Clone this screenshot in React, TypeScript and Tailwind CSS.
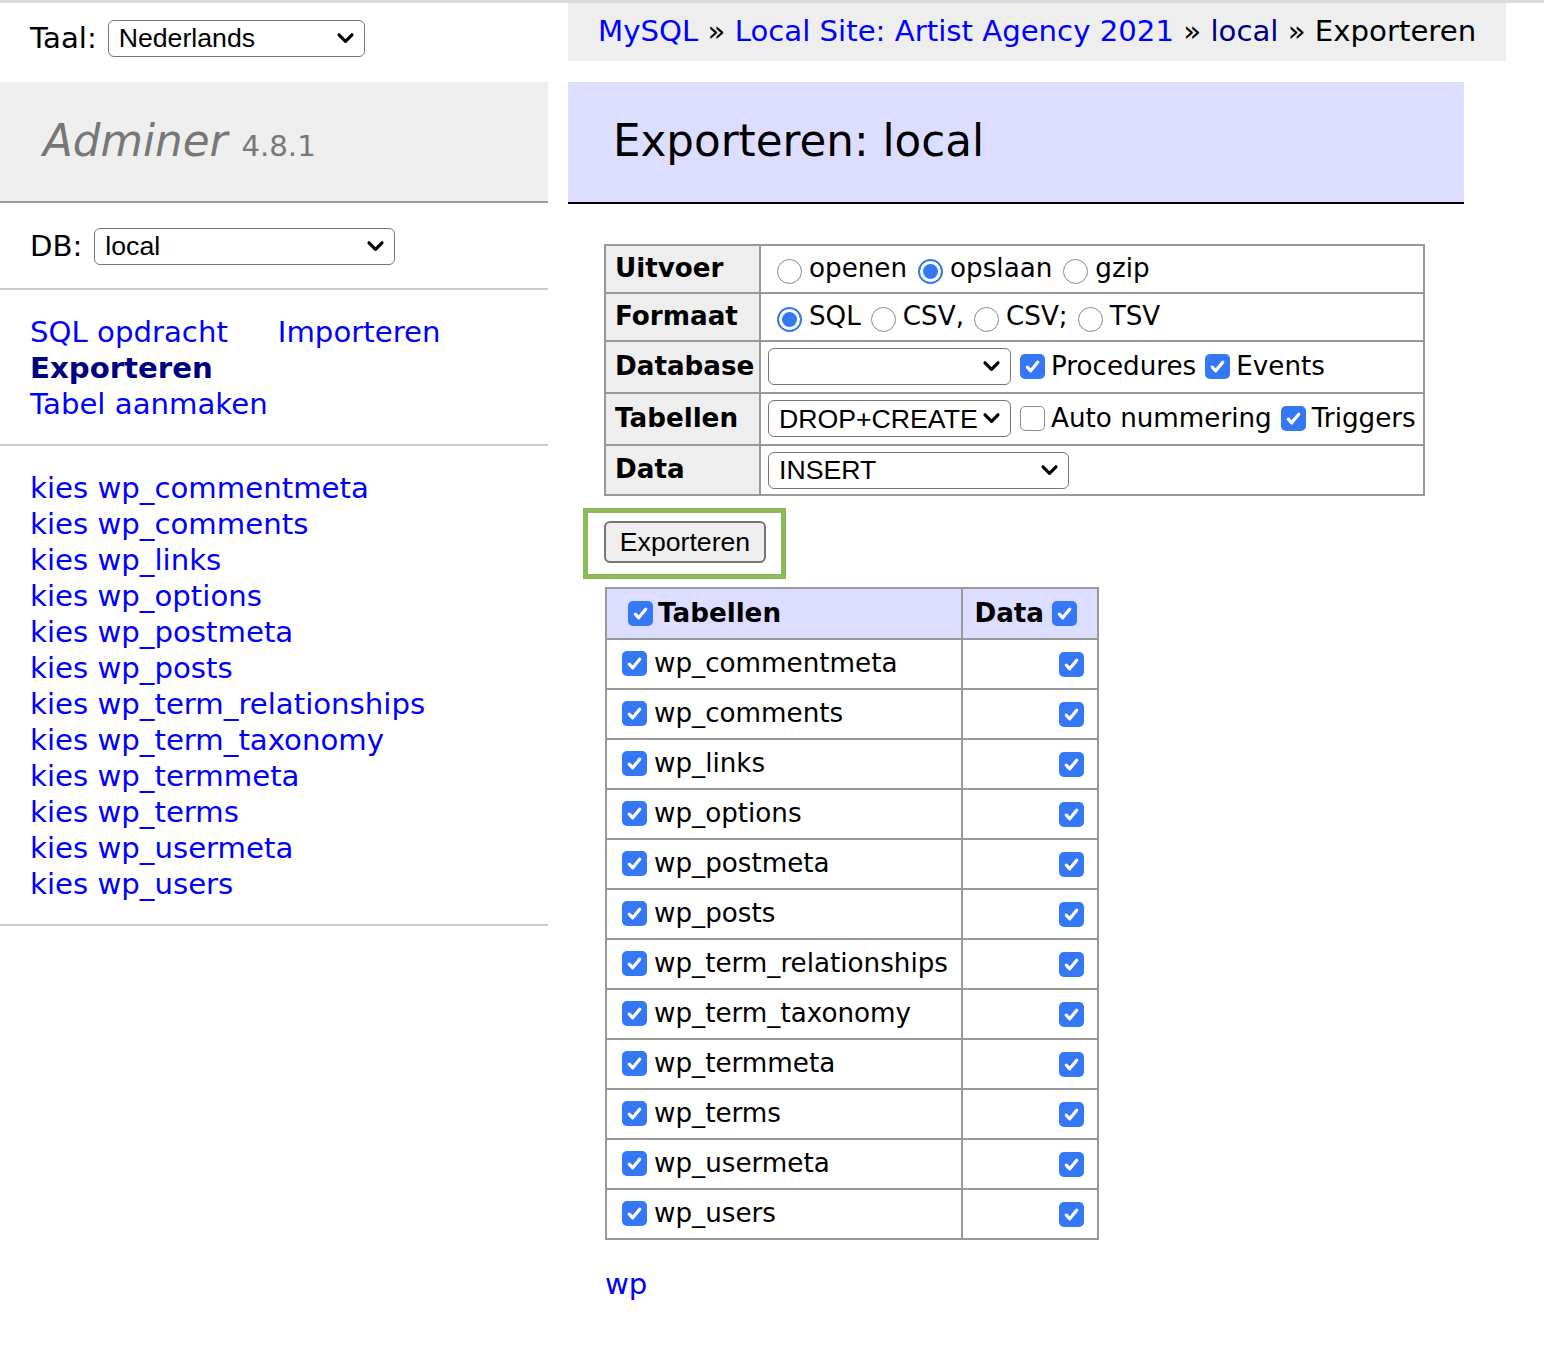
import React from 'react';

const tables = [
  'wp_commentmeta',
  'wp_comments',
  'wp_links',
  'wp_options',
  'wp_postmeta',
  'wp_posts',
  'wp_term_relationships',
  'wp_term_taxonomy',
  'wp_termmeta',
  'wp_terms',
  'wp_usermeta',
  'wp_users',
];

const Check = ({ checked = true }: { checked?: boolean }) =>
  checked ? (
    <span className="inline-flex h-[25px] w-[25px] shrink-0 items-center justify-center rounded-[5px] bg-[#3478f6]">
      <svg viewBox="0 0 16 16" className="h-[19px] w-[19px]">
        <path d="M3.6 8.6l2.9 3 5.9-7.2" fill="none" stroke="white" strokeWidth="2.7" strokeLinecap="round" strokeLinejoin="round" />
      </svg>
    </span>
  ) : (
    <span className="inline-block h-[25px] w-[25px] shrink-0 rounded-[5px] border-[1.5px] border-[#8a8a8a] bg-white" />
  );

const Radio = ({ checked = false }: { checked?: boolean }) =>
  checked ? (
    <span className="mt-[6px] inline-flex h-[25px] w-[25px] shrink-0 items-center justify-center rounded-full border-2 border-[#3478f6] bg-white">
      <span className="h-[15px] w-[15px] rounded-full bg-[#3478f6]" />
    </span>
  ) : (
    <span className="mt-[6px] inline-block h-[25px] w-[25px] shrink-0 rounded-full border-[1.5px] border-[#8a8a8a] bg-white" />
  );

const Chevron = () => (
  <svg viewBox="0 0 20 14" className="h-[13px] w-[19px] shrink-0">
    <polyline points="3,3 10,10 17,3" fill="none" stroke="black" strokeWidth="3.4" strokeLinecap="round" strokeLinejoin="round" />
  </svg>
);

const Select = ({ value, className }: { value: string; className: string }) => (
  <div
    className={`flex items-center justify-between rounded-[6px] border-[1.5px] border-[#767676] bg-white pl-[10px] pr-[9px] font-['Liberation_Sans',Arial,sans-serif] text-[26.67px] text-black ${className}`}
  >
    <span className="leading-none">{value}</span>
    <Chevron />
  </div>
);

const Option = ({ label, checked }: { label: string; checked?: boolean }) => (
  <span className="flex items-center gap-[7px]">
    <Radio checked={checked} />
    <span>{label}</span>
  </span>
);

const App: React.FC = () => {
  return (
    <div className="min-h-[1348px] w-full border-t-[3px] border-[#d8dbdf] bg-white font-['DejaVu_Sans',Verdana,sans-serif] text-[29.2px] text-black">
      <div className="flex">
        {/* menu */}
        <div className="w-[548px] shrink-0">
          <div className="flex h-[79px] items-start gap-[11px] pl-[30px] pt-[17px]">
            <span className="leading-[37px]">Taal:</span>
            <Select value="Nederlands" className="h-[37px] w-[257px]" />
          </div>
          <div className="flex h-[121px] items-center border-b-2 border-[#999] bg-[#eee] pl-[43px] text-[#777]">
            <span className="text-[43.6px] italic leading-none">Adminer</span>
            <span className="ml-[14px] mt-[10px] text-[29.2px] leading-none">4.8.1</span>
          </div>
          <div className="flex items-center gap-[12px] border-b-2 border-[#ccc] pb-[23px] pl-[30px] pt-[25px]">
            <span className="leading-[37px]">DB:</span>
            <Select value="local" className="h-[37px] w-[301px]" />
          </div>
          <div className="border-b-2 border-[#ccc] pb-[22px] pl-[30px] pt-[24px] leading-[36px]">
            <div className="flex gap-[50px]">
              <a className="text-[#0000ff]">SQL opdracht</a>
              <a className="text-[#0000ff]">Importeren</a>
            </div>
            <div>
              <a className="font-bold text-[#000080]">Exporteren</a>
            </div>
            <div>
              <a className="text-[#0000ff]">Tabel aanmaken</a>
            </div>
          </div>
          <ul className="border-b-2 border-[#ccc] pb-[22px] pl-[30px] pt-[24px] leading-[36px]">
            {tables.map((t) => (
              <li key={t}>
                <a className="text-[#0000ff]">kies {t}</a>
              </li>
            ))}
          </ul>
        </div>

        {/* content */}
        <div className="pl-[20px]">
          <div className="flex h-[58px] w-[938px] items-center whitespace-nowrap bg-[#eee] px-[30px]">
            <a className="text-[#0000ff]">MySQL</a>
            <span>&nbsp;»&nbsp;</span>
            <a className="text-[#0000ff]">Local Site: Artist Agency 2021</a>
            <span>&nbsp;»&nbsp;</span>
            <a className="text-[#000080]">local</a>
            <span>&nbsp;»&nbsp;Exporteren</span>
          </div>

          <h2 className="mt-[21px] flex h-[122px] w-[896px] items-center border-b-2 border-black bg-[#ddf] pl-[45px] text-[43.6px] leading-none">
            Exporteren: local
          </h2>

          <table className="ml-[36px] mt-[40px] border-2 border-[#999] text-[26.2px]">
            <tbody>
              <tr className="h-[48px]">
                <th className="w-[155px] border-2 border-[#999] bg-[#eee] pl-[9px] text-left font-bold">Uitvoer</th>
                <td className="w-[664px] border-2 border-[#999] pl-[16px]">
                  <div className="flex items-center gap-[11px]">
                    <Option label="openen" />
                    <Option label="opslaan" checked />
                    <Option label="gzip" />
                  </div>
                </td>
              </tr>
              <tr className="h-[48px]">
                <th className="border-2 border-[#999] bg-[#eee] pl-[9px] text-left font-bold">Formaat</th>
                <td className="border-2 border-[#999] pl-[16px]">
                  <div className="flex items-center gap-[10px]">
                    <Option label="SQL" checked />
                    <Option label="CSV," />
                    <Option label="CSV;" />
                    <Option label="TSV" />
                  </div>
                </td>
              </tr>
              <tr className="h-[52px]">
                <th className="border-2 border-[#999] bg-[#eee] pl-[9px] text-left font-bold">Database</th>
                <td className="border-2 border-[#999] pl-[7px]">
                  <div className="flex items-center">
                    <Select value="" className="h-[37px] w-[243px]" />
                    <span className="ml-[9px] flex items-center gap-[6px]">
                      <Check />
                      <span>Procedures</span>
                    </span>
                    <span className="ml-[9px] flex items-center gap-[6px]">
                      <Check />
                      <span>Events</span>
                    </span>
                  </div>
                </td>
              </tr>
              <tr className="h-[52px]">
                <th className="border-2 border-[#999] bg-[#eee] pl-[9px] text-left font-bold">Tabellen</th>
                <td className="border-2 border-[#999] pl-[7px]">
                  <div className="flex items-center">
                    <Select value="DROP+CREATE" className="h-[37px] w-[243px]" />
                    <span className="ml-[9px] flex items-center gap-[6px]">
                      <Check checked={false} />
                      <span>Auto nummering</span>
                    </span>
                    <span className="ml-[9px] flex items-center gap-[6px]">
                      <Check />
                      <span>Triggers</span>
                    </span>
                  </div>
                </td>
              </tr>
              <tr className="h-[50px]">
                <th className="border-2 border-[#999] bg-[#eee] pl-[9px] text-left font-bold">Data</th>
                <td className="border-2 border-[#999] pl-[7px]">
                  <Select value="INSERT" className="h-[37px] w-[301px]" />
                </td>
              </tr>
            </tbody>
          </table>

          <div className="ml-[15px] mt-[12px] h-[71px] w-[203px] border-[5px] border-[#8bba57] pl-[16px] pt-[7px]">
            <button className="h-[42px] w-[162px] rounded-[6px] border-2 border-[#767676] bg-[#efefef] font-['Liberation_Sans',Arial,sans-serif] text-[26.67px] leading-none text-black">
              Exporteren
            </button>
          </div>

          <table className="ml-[37px] mt-[8px] border-2 border-[#999] text-[26.2px]">
            <thead>
              <tr className="h-[51px] bg-[#ddf]">
                <th className="w-[356px] border-2 border-[#999] pl-[21px] text-left font-bold">
                  <span className="flex items-center gap-[5px]">
                    <Check />
                    <span>Tabellen</span>
                  </span>
                </th>
                <th className="w-[136px] border-2 border-[#999] pr-[20px] text-right font-bold">
                  <span className="flex items-center justify-end gap-[8px]">
                    <span>Data</span>
                    <Check />
                  </span>
                </th>
              </tr>
            </thead>
            <tbody>
              {tables.map((t) => (
                <tr key={t} className="h-[50px]">
                  <td className="border-2 border-[#999] pl-[15px]">
                    <span className="flex items-center gap-[7px]">
                      <Check />
                      <span>{t}</span>
                    </span>
                  </td>
                  <td className="border-2 border-[#999] pr-[13px]">
                    <span className="flex justify-end">
                      <Check />
                    </span>
                  </td>
                </tr>
              ))}
            </tbody>
          </table>

          <p className="ml-[37px] mt-[26px] leading-[36px]">
            <a className="text-[#0000ff]">wp</a>
          </p>
        </div>
      </div>
    </div>
  );
};

export default App;
